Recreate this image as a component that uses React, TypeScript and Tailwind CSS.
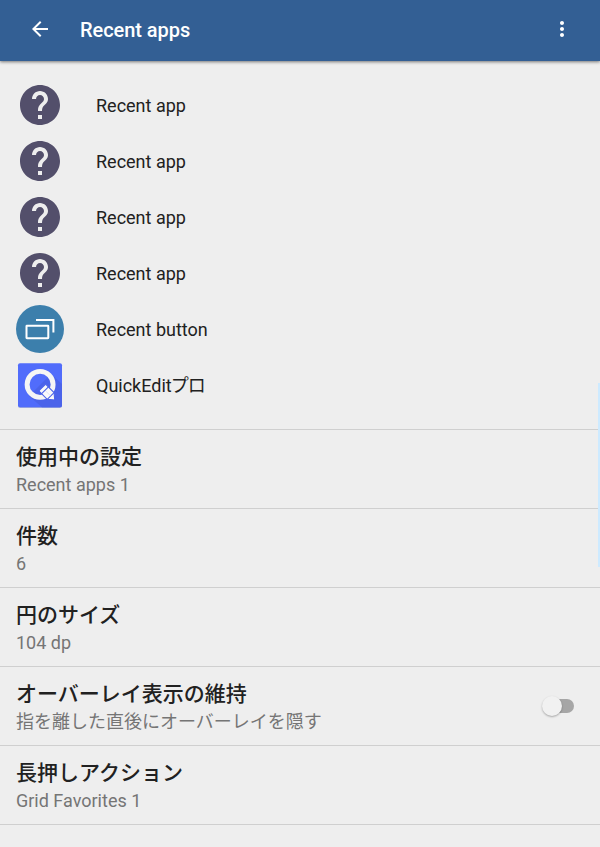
import { MdArrowBack, MdHelp, MdMoreVert } from 'react-icons/md';

function RecentButtonIcon() {
  return (
    <svg className="h-12 w-12" viewBox="0 0 48 48" fill="none">
      <circle cx="24" cy="24" r="24" fill="#3c7fac" />
      <rect x="10.5" y="20.8" width="21.8" height="12.4" rx="0.4" stroke="#fff" strokeWidth="2" />
      <path d="M20 15.1h17.4v12.4" stroke="#fff" strokeWidth="2" />
    </svg>
  );
}

function QuickEditIcon() {
  return (
    <svg className="h-12 w-12" viewBox="0 0 48 48" fill="none">
      <rect x="2" y="3" width="44" height="44" rx="2" fill="#a9b0d8" />
      <rect x="2" y="2.3" width="44" height="43.9" rx="2" fill="#516cfb" />
      <path d="m35 13 11 10v21.2a2 2 0 0 1-2 2H26L13 35Z" fill="#4b63ea" />
      <circle cx="24.1" cy="23.4" r="13" stroke="#f5f5f5" strokeWidth="4.9" />
      <g transform="translate(26.2 26.5) rotate(45)">
        <path
          d="M1-4.8h10.9L17.8 0l-5.9 4.8H1a1 1 0 0 1-1-1v-7.6a1 1 0 0 1 1-1Z"
          fill="#fafafa"
          stroke="#4b63ea"
          strokeWidth="1.1"
        />
        <path d="M4-4.8v9.6M12-4.8v9.6" stroke="#4b63ea" strokeWidth="1.1" />
        <path d="M5 0h6.5" stroke="#d5daf8" strokeWidth="0.7" />
      </g>
    </svg>
  );
}

const apps = [
  { name: 'Recent app', icon: <MdHelp className="h-12 w-12 text-[#534f6b]" /> },
  { name: 'Recent app', icon: <MdHelp className="h-12 w-12 text-[#534f6b]" /> },
  { name: 'Recent app', icon: <MdHelp className="h-12 w-12 text-[#534f6b]" /> },
  { name: 'Recent app', icon: <MdHelp className="h-12 w-12 text-[#534f6b]" /> },
  { name: 'Recent button', icon: <RecentButtonIcon /> },
  { name: <>QuickEdit<span className="-ml-px tracking-[-1px]">プロ</span></>, icon: <QuickEditIcon /> },
];

const settings = [
  { title: '使用中の設定', summary: 'Recent apps 1' },
  { title: '件数', summary: '6' },
  { title: '円のサイズ', summary: '104 dp' },
  { title: 'オーバーレイ表示の維持', summary: '指を離した直後にオーバーレイを隠す', toggle: true },
  { title: '長押しアクション', summary: 'Grid Favorites 1' },
];

function Toggle() {
  return (
    <button role="switch" aria-checked="false" className="mr-2.5 flex h-5 w-8 items-center">
      <span className="z-10 h-5 w-5 shrink-0 rounded-full bg-[#f1f1f1] shadow-[0_1px_2px_rgba(0,0,0,0.3)]" />
      <span className="-ml-2.5 h-3.5 w-[22px] shrink-0 rounded-r-full bg-[#a6a6a6]" />
    </button>
  );
}

export default function App() {
  return (
    <div className="relative h-[847px] w-[600px] overflow-hidden bg-[#eeeeee] font-['Roboto','Noto_Sans_CJK_JP',sans-serif] text-[#212121]">
      <header className="flex h-[61px] items-center bg-[#335f94] pr-[26px] pb-[3px] pl-7 text-white shadow-[0_1px_3px_rgba(0,0,0,0.5)]">
        <MdArrowBack className="h-6 w-6" />
        <h1 className="mt-px ml-7 flex-1 text-xl font-medium tracking-[-0.05px]">Recent apps</h1>
        <MdMoreVert className="h-6 w-6" />
      </header>

      <ul className="py-4">
        {apps.map((app, index) => (
          <li key={index} className="flex h-14 items-center px-4">
            {app.icon}
            <span className="mt-0.5 ml-8 text-lg leading-6">{app.name}</span>
          </li>
        ))}
      </ul>

      <ul className="border-b border-[#cfcfcf]">
        {settings.map((item) => (
          <li key={item.title} className="flex h-[79px] items-center justify-between border-t border-[#cfcfcf] px-4">
            <div className="pt-[3px]">
              <p className="text-[21px] leading-7 font-medium">{item.title}</p>
              <p className="text-lg leading-[27px] text-[#757575]">{item.summary}</p>
            </div>
            {item.toggle && <Toggle />}
          </li>
        ))}
      </ul>

      {/* edge trigger strip, drawn over the list */}
      <div className="absolute top-[383px] right-0 h-[184px] w-0.5 bg-[#cdeaff]" />
    </div>
  );
}
